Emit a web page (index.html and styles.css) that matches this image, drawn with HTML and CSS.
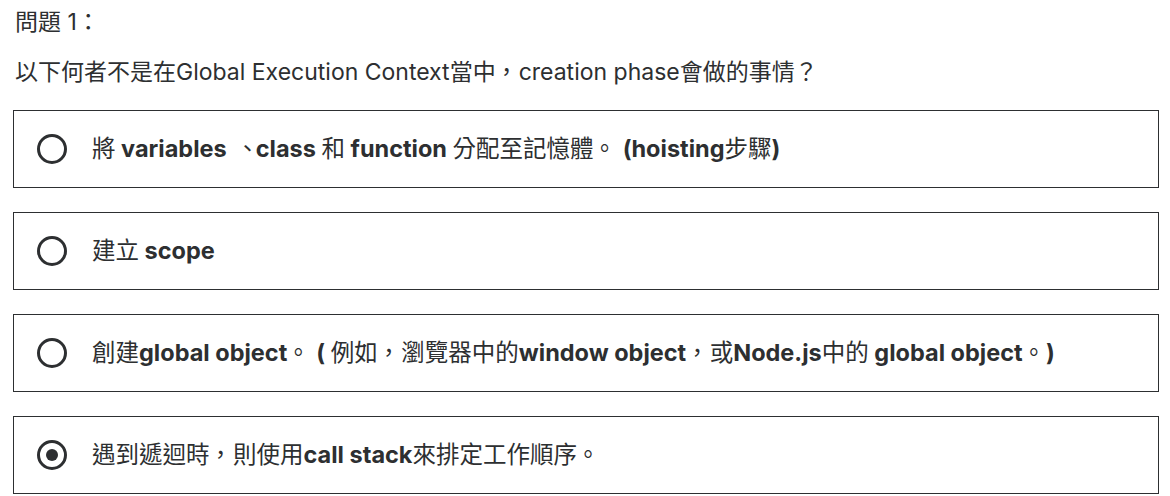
FILE: index.html
```html
<!DOCTYPE html>
<html lang="zh-Hant">
<head>
<meta charset="utf-8">
<title>問題1</title>
<link rel="stylesheet" href="styles.css">
</head>
<body>
<div class="quiz">
  <div class="q-title">問題 1：</div>
  <div class="q-text">以下何者不是在Global Execution Context當中<span class="p">，</span>creation phase會做的事情？</div>
  <ul class="options">
    <li class="option">
      <span class="radio"></span>
      <span class="label"><span class="cjk">將</span> variables <span class="p p-r">、</span>class <span class="cjk">和</span> function <span class="cjk">分配至記憶體</span><span class="p">。</span> (hoisting<span class="cjk">步驟</span>)</span>
    </li>
    <li class="option">
      <span class="radio"></span>
      <span class="label"><span class="cjk">建立</span> scope</span>
    </li>
    <li class="option">
      <span class="radio"></span>
      <span class="label"><span class="cjk">創建</span>global object<span class="p">。</span> ( <span class="cjk">例如</span><span class="p">，</span><span class="cjk">瀏覽器中的</span>window object<span class="p">，</span><span class="cjk">或</span>Node.js<span class="cjk">中的</span> global object<span class="p">。</span>)</span>
    </li>
    <li class="option">
      <span class="radio checked"></span>
      <span class="label"><span class="cjk">遇到遞迴時</span><span class="p">，</span><span class="cjk">則使用</span>call stack<span class="cjk">來排定工作順序</span><span class="p">。</span></span>
    </li>
  </ul>
</div>
</body>
</html>
```
FILE: styles.css
```css
html, body {
  margin: 0;
  padding: 0;
  background: #ffffff;
}
body {
  font-family: "Inter", "Noto Sans CJK TC", sans-serif;
  color: #2d2f31;
}
.quiz {
  padding: 6px 11px 0 13px;
}
.q-title {
  font-size: 23px;
  line-height: 32px;
  padding-left: 2px;
  height: 32px;
}
.q-text {
  font-size: 23px;
  line-height: 32px;
  margin-top: 18px;
  padding-left: 2px;
}
.options {
  list-style: none;
  margin: 22px 0 0 0;
  padding: 0;
  display: flex;
  flex-direction: column;
  gap: 24px;
}
.option {
  box-sizing: border-box;
  height: 78px;
  border: 1px solid #2d2f31;
  display: flex;
  align-items: center;
  padding-left: 23px;
  gap: 25px;
}
.radio {
  box-sizing: border-box;
  width: 30px;
  height: 30px;
  border: 3px solid #2d2f31;
  border-radius: 50%;
  flex: none;
  display: flex;
  align-items: center;
  justify-content: center;
}
.radio.checked::after {
  content: "";
  width: 12px;
  height: 12px;
  border-radius: 50%;
  background: #2d2f31;
}
.label {
  font-size: 23.5px;
  font-weight: 700;
  line-height: 32px;
}
.cjk {
  font-weight: 400;
}
/* Taiwan-style centred full-width punctuation */
.p {
  display: inline-block;
  box-sizing: border-box;
  width: 1em;
  padding-left: 0.22em;
  white-space: nowrap;
  font-weight: 400;
  font-feature-settings: "halt" 1;
}
.p-r {
  padding-left: 0.4em;
}
```
